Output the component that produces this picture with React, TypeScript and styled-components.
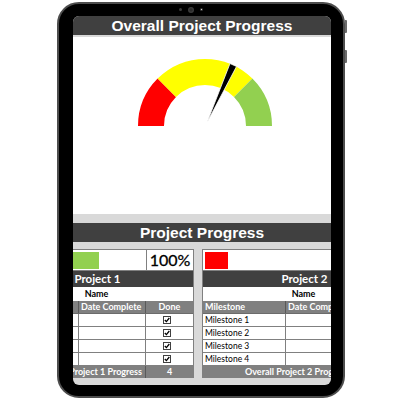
import styled, { createGlobalStyle } from 'styled-components';

const GlobalStyle = createGlobalStyle`
  html, body {
    margin: 0;
    padding: 0;
    background: #fff;
  }
  #root {
    width: 400px;
    height: 400px;
    overflow: hidden;
  }
`;

const Page = styled.div`
  width: 400px;
  height: 400px;
  box-sizing: border-box;
  padding: 2px 0 0 57px;
`;

const Tablet = styled.div`
  position: relative;
  box-sizing: border-box;
  width: 288px;
  height: 396px;
  background: #000;
  border: 2px solid #4d4d4d;
  border-radius: 22px;
  padding: 0 12px 11px 14px;
  display: flex;
  flex-direction: column;
`;

const SideButton = styled.div<{ $top: number }>`
  position: absolute;
  right: -4px;
  top: ${p => p.$top}px;
  width: 2px;
  height: 13px;
  background: #6a6a6a;
  border-radius: 0 1px 1px 0;
`;

const CameraBar = styled.div`
  height: 12px;
  flex-shrink: 0;
  display: flex;
  align-items: center;
  justify-content: center;
  gap: 6px;
  padding: 0 22px 1px 0;
  box-sizing: border-box;
`;

const Dot = styled.span<{ $size: number; $core: string }>`
  width: ${p => p.$size}px;
  height: ${p => p.$size}px;
  border-radius: 50%;
  background: radial-gradient(circle, ${p => p.$core} 0 30%, #3a3a3a 45%);
`;

const Screen = styled.div`
  flex: 1;
  background: #d9d9d9;
  border-radius: 6px;
  overflow: hidden;
  display: flex;
  flex-direction: column;
`;

const Banner = styled.div<{ $gap?: number }>`
  flex-shrink: 0;
  height: 19px;
  margin-top: ${p => p.$gap ?? 0}px;
  background: #404040;
  color: #fff;
  font: bold 15.5px/19px "Liberation Sans", Arial, sans-serif;
  text-align: center;
  white-space: nowrap;
`;

const GaugePanel = styled.div`
  flex-shrink: 0;
  margin-top: 2px;
  height: 177px;
  box-sizing: border-box;
  padding: 20px 0 0 6px;
  background: #fff;
  display: flex;
  justify-content: center;
  align-items: flex-start;
`;

const ProjectsRow = styled.div`
  flex-shrink: 0;
  margin: 7px 0 0 -78px;
  display: flex;
  gap: 8px;
`;

const Panel = styled.div`
  flex-shrink: 0;
  width: 199px;
  box-sizing: border-box;
  border-left: 1px solid #808080;
  border-right: 1px solid #808080;
  display: flex;
  flex-direction: column;
  font-family: Lato, "Open Sans", sans-serif;
`;

const ProgressRow = styled.div`
  height: 22px;
  box-sizing: border-box;
  border-top: 1px solid #808080;
  border-bottom: 1px solid #808080;
  background: #fff;
  display: grid;
  grid-template-columns: 150px 47px;
`;

const BarCell = styled.div`
  padding: 2px 0 1px 2px;
  display: flex;
`;

const Bar = styled.div<{ $color: string }>`
  height: 100%;
  background: ${p => p.$color};
`;

const PercentCell = styled.div`
  border-left: 1px solid #808080;
  font-size: 16px;
  line-height: 20px;
  text-align: center;
  color: #000;
  -webkit-text-stroke: 0.3px #000;
`;

const ProjectTitle = styled.div`
  height: 16px;
  background: #404040;
  color: #fff;
  font-weight: bold;
  font-size: 11.5px;
  line-height: 16px;
  text-align: center;
  padding-left: 6px;
`;

const NameRow = styled.div`
  height: 14px;
  background: #fff;
  color: #000;
  font-weight: bold;
  font-size: 9px;
  line-height: 14px;
  text-align: center;
  padding-left: 4px;
`;

const TableRow = styled.div<{ $head?: boolean }>`
  height: 13px;
  box-sizing: border-box;
  display: grid;
  grid-template-columns: 83px 67px 47px;
  background: ${p => (p.$head ? '#808080' : '#fff')};
  color: ${p => (p.$head ? '#fff' : '#000')};
  font-weight: ${p => (p.$head ? 'bold' : 'normal')};
  font-size: ${p => (p.$head ? 9 : 8.5)}px;
  border-bottom: 1px solid ${p => (p.$head ? '#6b6b6b' : '#808080')};
`;

const Cell = styled.div<{ $center?: boolean; $last?: boolean; $dark?: boolean }>`
  box-sizing: border-box;
  padding: 0 2px;
  line-height: 12px;
  white-space: nowrap;
  overflow: hidden;
  display: flex;
  align-items: center;
  justify-content: ${p => (p.$center ? 'center' : 'flex-start')};
  border-right: ${p => (p.$last ? 'none' : `1px solid ${p.$dark ? '#595959' : '#808080'}`)};
`;

const Footer = styled.div`
  height: 12px;
  display: grid;
  grid-template-columns: 150px 47px;
  background: #808080;
  color: #fff;
  font-weight: bold;
  font-size: 9px;
  line-height: 12px;
`;

const FooterLabel = styled.div`
  text-align: right;
  padding-right: 3px;
  white-space: nowrap;
  overflow: hidden;
  border-right: 1px solid #595959;
`;

const FooterCount = styled.div`
  text-align: center;
`;

const Box = styled.span`
  width: 8px;
  height: 8px;
  box-sizing: border-box;
  margin-right: 6px;
  border: 1px solid #404040;
  background: #fff;
  display: inline-flex;
`;

const CheckBox = ({ checked }: { checked: boolean }) => (
  <Box>
    {checked && (
      <svg width="6" height="6" viewBox="0 0 6 6">
        <path d="M0.8 3 L2.4 4.6 L5.3 1" fill="none" stroke="#000" strokeWidth="1.3" />
      </svg>
    )}
  </Box>
);

const Gauge = () => (
  <svg width="140" height="72" viewBox="0 0 140 72">
    <path d="M 3 69 A 67 67 0 0 1 22.624 21.624 L 41.009 40.009 A 41 41 0 0 0 29 69 Z" fill="#ff0000" />
    <path d="M 22.624 21.624 A 67 67 0 0 1 117.376 21.624 L 98.991 40.009 A 41 41 0 0 0 41.009 40.009 Z" fill="#ffff00" />
    <path d="M 117.376 21.624 A 67 67 0 0 1 137 69 L 111 69 A 41 41 0 0 0 98.991 40.009 Z" fill="#92d050" />
    <polygon points="72,65.5 95,6.5 101.5,9.5" fill="#000" stroke="#fff" strokeWidth="0.8" strokeLinejoin="round" />
  </svg>
);

type Project = {
  title: string;
  barColor: string;
  barWidth: number;
  percent: string;
  footer: string;
  count: string;
  done: boolean;
};

const projects: Project[] = [
  { title: 'Project 1', barColor: '#92d050', barWidth: 101, percent: '100%', footer: 'Overall Project 1 Progress', count: '4', done: true },
  { title: 'Project 2', barColor: '#ff0000', barWidth: 23, percent: '0%', footer: 'Overall Project 2 Progress', count: '0', done: false },
];

const milestones = ['Milestone 1', 'Milestone 2', 'Milestone 3', 'Milestone 4'];

const ProjectPanel = ({ project }: { project: Project }) => (
  <Panel>
    <ProgressRow>
      <BarCell>
        <Bar $color={project.barColor} style={{ width: project.barWidth }} />
      </BarCell>
      <PercentCell>{project.percent}</PercentCell>
    </ProgressRow>
    <ProjectTitle>{project.title}</ProjectTitle>
    <NameRow>Name</NameRow>
    <TableRow $head>
      <Cell $dark>Milestone</Cell>
      <Cell $dark>Date Complete</Cell>
      <Cell $center $last>Done</Cell>
    </TableRow>
    {milestones.map(m => (
      <TableRow key={m}>
        <Cell>{m}</Cell>
        <Cell />
        <Cell $center $last>
          <CheckBox checked={project.done} />
        </Cell>
      </TableRow>
    ))}
    <Footer>
      <FooterLabel>{project.footer}</FooterLabel>
      <FooterCount>{project.count}</FooterCount>
    </Footer>
  </Panel>
);

const App = () => (
  <Page>
    <GlobalStyle />
    <Tablet>
      <SideButton $top={16} />
      <SideButton $top={46} />
      <CameraBar>
        <Dot $size={3} $core="#3a3a3a" />
        <Dot $size={6} $core="#2a2a2a" />
        <Dot $size={3} $core="#d0d0d0" />
      </CameraBar>
      <Screen>
        <Banner>Overall Project Progress</Banner>
        <GaugePanel>
          <Gauge />
        </GaugePanel>
        <Banner $gap={9}>Project Progress</Banner>
        <ProjectsRow>
          {projects.map(p => (
            <ProjectPanel key={p.title} project={p} />
          ))}
        </ProjectsRow>
      </Screen>
    </Tablet>
  </Page>
);

export default App;
